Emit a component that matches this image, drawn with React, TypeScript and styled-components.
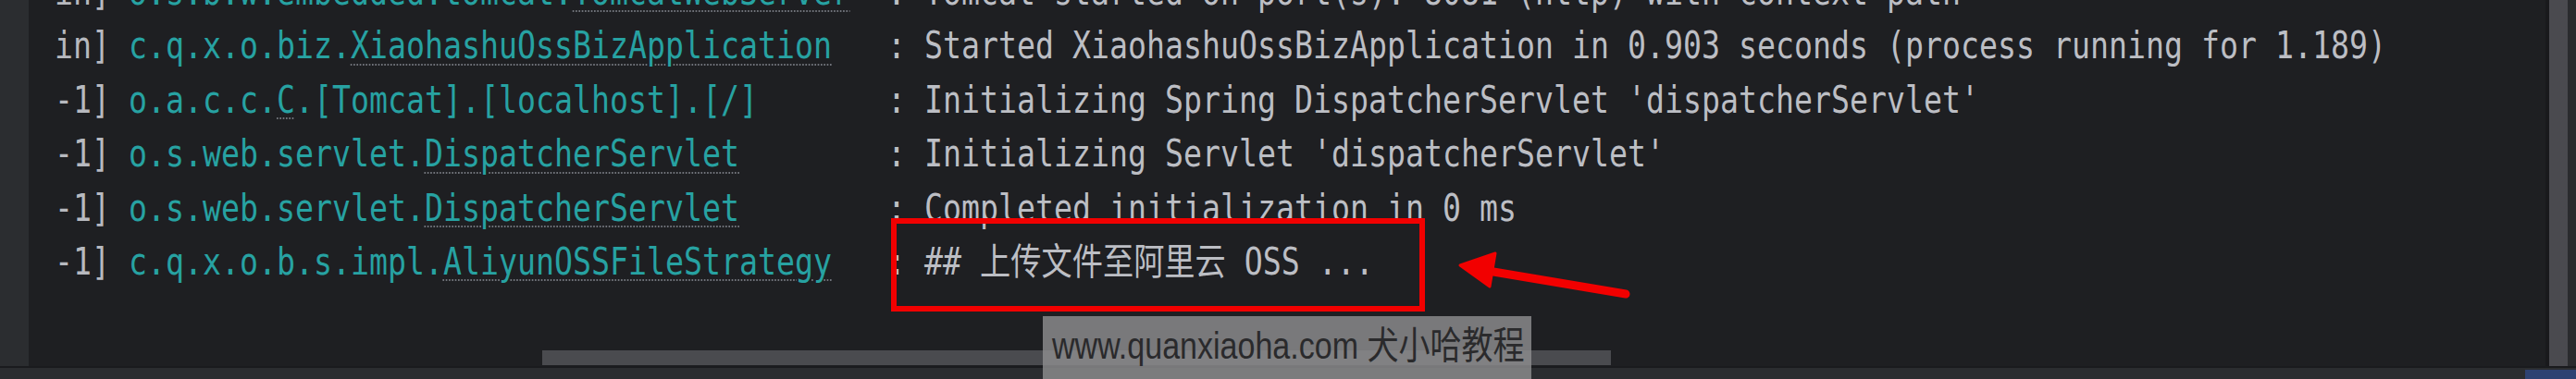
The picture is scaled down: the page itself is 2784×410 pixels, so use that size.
import React from 'react';
import styled, { createGlobalStyle } from 'styled-components';

const GlobalStyle = createGlobalStyle`
  html,
  body {
    margin: 0;
    padding: 0;
    background: #1e1f22;
  }

  body {
    width: 2784px;
    height: 410px;
    overflow: hidden;
  }
`;

interface LogEntry {
  thread: string;
  pkg: string;
  link: string;
  rest: string;
  message: string;
}

const LOGGER_WIDTH = 40;

const entries: LogEntry[] = [
  {
    thread: 'in]',
    pkg: 'o.s.b.w.embedded.tomcat.',
    link: 'TomcatWebServer',
    rest: '',
    message: "Tomcat started on port(s): 8081 (http) with context path ''",
  },
  {
    thread: 'in]',
    pkg: 'c.q.x.o.biz.',
    link: 'XiaohashuOssBizApplication',
    rest: '',
    message: 'Started XiaohashuOssBizApplication in 0.903 seconds (process running for 1.189)',
  },
  {
    thread: '-1]',
    pkg: 'o.a.c.c.',
    link: 'C',
    rest: '.[Tomcat].[localhost].[/]',
    message: "Initializing Spring DispatcherServlet 'dispatcherServlet'",
  },
  {
    thread: '-1]',
    pkg: 'o.s.web.servlet.',
    link: 'DispatcherServlet',
    rest: '',
    message: "Initializing Servlet 'dispatcherServlet'",
  },
  {
    thread: '-1]',
    pkg: 'o.s.web.servlet.',
    link: 'DispatcherServlet',
    rest: '',
    message: 'Completed initialization in 0 ms',
  },
  {
    thread: '-1]',
    pkg: 'c.q.x.o.b.s.impl.',
    link: 'AliyunOSSFileStrategy',
    rest: '',
    message: '## 上传文件至阿里云 OSS ...',
  },
];

const Page = styled.div`
  position: relative;
  width: 2784px;
  height: 410px;
  display: flex;
  flex-direction: column;
  overflow: hidden;
`;

const Main = styled.div`
  display: flex;
  height: 396px;
`;

const Gutter = styled.div`
  width: 31px;
  flex-shrink: 0;
  background: #2b2d30;
`;

const Console = styled.div`
  position: relative;
  flex: 1;
  background: #1e1f22;
  padding-left: 28px;
  overflow: hidden;
`;

/* the capture is squeezed sideways, so the glyphs are narrowed to match */
const Log = styled.div`
  margin-top: -38px;
  transform: scaleX(0.8305);
  transform-origin: left top;
  font-family: 'DejaVu Sans Mono', 'Noto Sans CJK SC', monospace;
  font-size: 40px;
  white-space: pre;
`;

const Line = styled.div`
  height: 58.4px;
  line-height: 58.4px;
`;

const Thread = styled.span`
  color: #b7b9bf;
`;

const Logger = styled.span`
  color: #27a2a2;
`;

const Link = styled.span`
  text-decoration: underline dotted #70737a;
  text-decoration-thickness: 2px;
  text-underline-offset: 6px;
`;

const Message = styled.span`
  color: #bcbec4;
`;

const HScroll = styled.div`
  position: absolute;
  left: 555px;
  top: 379px;
  width: 1155px;
  height: 16px;
  background: #4a4b4f;
`;

const Highlight = styled.div`
  position: absolute;
  left: 932px;
  top: 236px;
  width: 577px;
  height: 101px;
  box-sizing: border-box;
  border: 6px solid #f20000;
`;

const Arrow = styled.svg`
  position: absolute;
  left: 1539px;
  top: 262px;
`;

const VTrack = styled.div`
  width: 20px;
  flex-shrink: 0;
  border-left: 4px solid #19191c;
  padding-right: 9px;
  background: #2a2b2e;
  display: flex;
`;

const VThumb = styled.div`
  flex: 1;
  background: #4a4a4f;
`;

const BottomBar = styled.div`
  display: flex;
  height: 12px;
  border-top: 2px solid #1a1b1e;
  background: #2b2d30;
`;

const StatusBadge = styled.div`
  margin-left: auto;
  margin-top: 2px;
  width: 55px;
  background: #2e4272;
`;

const Watermark = styled.div`
  position: absolute;
  left: 1127px;
  top: 342px;
  width: 528px;
  height: 68px;
  padding: 9px 0 0 10px;
  box-sizing: border-box;
  background: rgba(141, 141, 143, 0.82);
`;

const WatermarkText = styled.div`
  transform: scaleX(0.83);
  transform-origin: left top;
  font-family: 'Liberation Sans', 'Noto Sans CJK SC', sans-serif;
  font-size: 41px;
  line-height: 47px;
  color: #2a2a2c;
  white-space: nowrap;
`;

const padLogger = (e: LogEntry) =>
  ' '.repeat(Math.max(0, LOGGER_WIDTH - (e.pkg + e.link + e.rest).length));

export default function App() {
  return (
    <>
      <GlobalStyle />
      <Page>
        <Main>
          <Gutter />
          <Console>
            <Log>
              {entries.map((e, i) => (
                <Line key={i}>
                  <Thread>{e.thread} </Thread>
                  <Logger>
                    {e.pkg}
                    <Link>{e.link}</Link>
                    {e.rest}
                    {padLogger(e)}
                  </Logger>
                  <Message> : {e.message}</Message>
                </Line>
              ))}
            </Log>
            <HScroll />
            <Highlight />
            <Arrow width="200" height="70" viewBox="0 0 200 70">
              <line x1="38" y1="31" x2="187" y2="56" stroke="#f20000" strokeWidth="9" strokeLinecap="round" />
              <polygon points="8,25 46,12 40,48" fill="#f20000" stroke="#f20000" strokeWidth="3" strokeLinejoin="round" />
            </Arrow>
          </Console>
          <VTrack>
            <VThumb />
          </VTrack>
        </Main>
        <BottomBar>
          <StatusBadge />
        </BottomBar>
        <Watermark>
          <WatermarkText>www.quanxiaoha.com 犬小哈教程</WatermarkText>
        </Watermark>
      </Page>
    </>
  );
}
